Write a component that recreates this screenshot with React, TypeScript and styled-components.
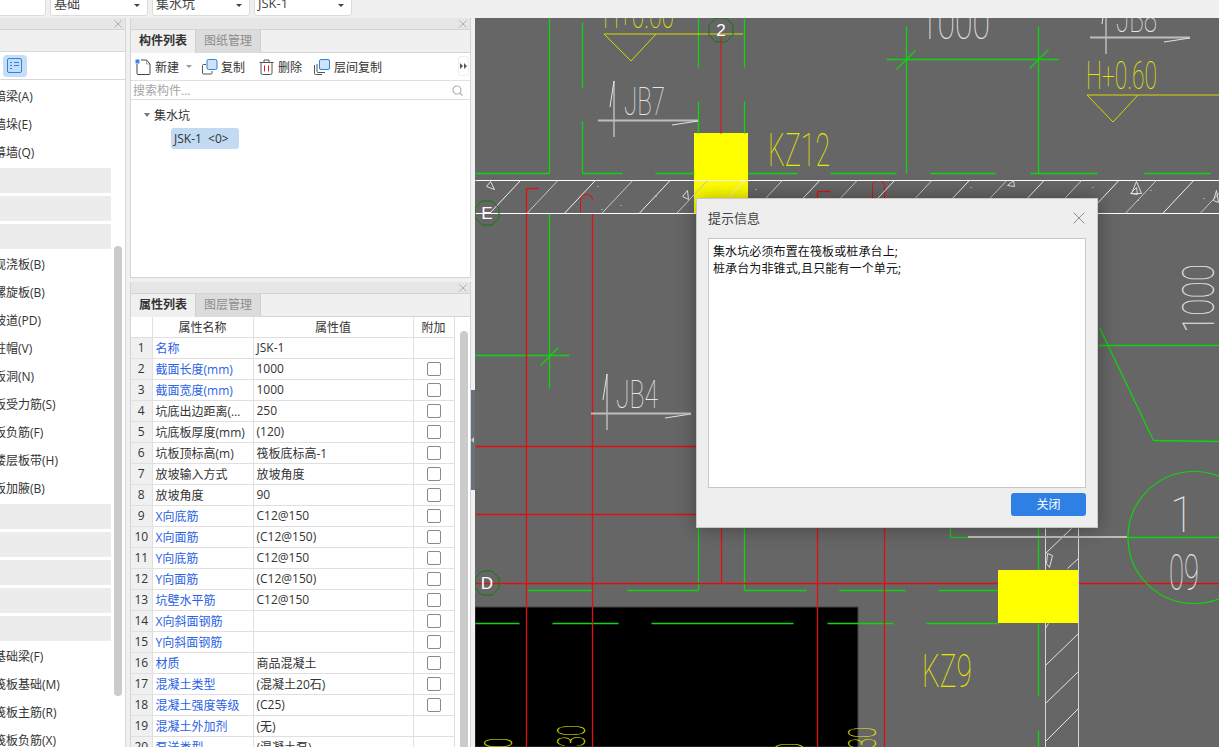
import React from 'react';
import styled, { createGlobalStyle } from 'styled-components';

const FONT = `"Open Sans", "Noto Sans CJK SC", sans-serif`;

const Global = createGlobalStyle`
  html, body { margin: 0; padding: 0; background: #f0f0f0; overflow: hidden; }
  * { box-sizing: border-box; }
  body { font-family: ${FONT}; font-size: 12px; color: #333; }
`;

const Page = styled.div`
  width: 1219px; height: 747px; display: flex; flex-direction: column; overflow: hidden; position: relative;
`;
const TopBar = styled.div`
  height: 18px; flex: none; background: #f0f0f0; display: flex; gap: 4px; align-items: flex-end; padding: 0 0 3px 0; margin-left: -52px; overflow: hidden;
`;
const Combo = styled.div`
  width: 98px; height: 22px; flex: none; background: #fff; border: 1px solid #dcdcdc; border-radius: 3px; padding: 0 3px; display: flex; align-items: center; justify-content: space-between; line-height: 14px; font-size: 13px; color: #444; margin-bottom: -1px;
  padding-bottom: 4px;
  &::after { content: ""; border-left: 3px solid transparent; border-right: 3px solid transparent; border-top: 3px solid #444; margin-right: 4px; margin-top: 5px; }
`;
const Main = styled.div`
  flex: 1; display: flex; min-height: 0;
`;
const Left = styled.aside`
  width: 126px; flex: none; background: #fff; border-right: 1px solid #d8d8d8; display: flex; flex-direction: column; overflow: hidden; position: relative;
`;
const TitleStrip = styled.div`
  height: 12px; flex: none; background: #e6e6e6; border-bottom: 1px solid #d4d4d4; display: flex; align-items: center; justify-content: flex-end; padding-right: 3px;
`;
const LeftStrip = styled.div`
  height: 22px; flex: none; background: #f0f0f0; border-bottom: 1px solid #d8d8d8;
`;
const LeftTools = styled.div`
  height: 28px; flex: none; border-bottom: 1px solid #d8d8d8; padding: 3px 0 3px 3px;
`;
const ListBtn = styled.div`
  width: 24px; height: 22px; background: #c4def5; border-radius: 4px; display: flex; align-items: center; justify-content: center;
`;
const LeftList = styled.div`
  flex: 1; display: flex; flex-direction: column; padding-top: 2.5px; width: 111px; overflow: hidden;
`;
const LeftItem = styled.div`
  height: 28px; flex: none; line-height: 28px; margin-left: -6px; white-space: nowrap; font-size: 12px; color: #333;
`;
const LeftBlank = styled.div`
  height: 25px; flex: none; margin: 1.5px 0; background: #ececec;
`;
const LeftThumb = styled.div`
  position: absolute; left: 114px; top: 228px; width: 8px; height: 450px; background: #cbcbcb; border-radius: 4px;
`;
const Gap = styled.div`
  width: 4px; flex: none; background: #f0f0f0;
`;
const Middle = styled.div`
  width: 341px; flex: none; display: flex; flex-direction: column; gap: 4px;
`;
const Panel = styled.section<{ $h?: number }>`
  ${p => (p.$h ? `height:${p.$h}px;flex:none;` : 'flex:1;min-height:0;')}
  background: #fff; border: 1px solid #d4d4d4; border-bottom-width: ${p => (p.$h ? 1 : 0)}px; border-top: 0; display: flex; flex-direction: column; overflow: hidden;
`;
const Tabs = styled.div`
  height: 23px; flex: none; background: #f0f0f0; border-bottom: 1px solid #d4d4d4; display: flex;
`;
const Tab = styled.div<{ $active?: boolean }>`
  width: 65px; height: 23px; line-height: 22px; text-align: center; font-size: 12px;
  font-weight: ${p => (p.$active ? 700 : 400)}; color: ${p => (p.$active ? '#333' : '#8c8c8c')};
  background: ${p => (p.$active ? '#f0f0f0' : '#dcdcdc')};
  border-right: 1px solid #d0d0d0;
`;
const Toolbar = styled.div`
  height: 28px; flex: none; display: flex; align-items: center; border-bottom: 1px solid #e0e0e0; padding-left: 4px; position: relative;
`;
const ToolBtn = styled.div<{ $w: number }>`
  width: ${p => p.$w}px; flex: none; display: flex; align-items: center; gap: 4px; font-size: 12px; color: #333; white-space: nowrap;
`;
const CopyLabel = styled.span`
  margin-left: -1px;
`;
const Caret = styled.span`
  border-left: 3px solid transparent; border-right: 3px solid transparent; border-top: 3px solid #999; margin-left: 3px;
`;
const MoreBtn = styled.div`
  position: absolute; right: 1px; top: 3px; width: 11px; height: 20px; border: 1px solid #eee; border-radius: 3px; display: flex; align-items: center; justify-content: center;
`;
const Search = styled.div`
  height: 19px; flex: none; border-bottom: 1px solid #e0e0e0; display: flex; align-items: center; justify-content: space-between; padding: 0 7px 0 2px; color: #a5a5a5; font-size: 12px;
`;
const Tree = styled.div`
  flex: 1; padding: 5px 0 0 13px;
`;
const TreeRoot = styled.div`
  height: 20px; display: flex; align-items: center; gap: 4px; color: #333;
  &::before { content: ""; border-left: 3.5px solid transparent; border-right: 3.5px solid transparent; border-top: 4px solid #777; }
`;
const TreeLeaf = styled.div`
  margin: 3px 0 0 27px; width: 68px; height: 21px; line-height: 21px; background: #c2daf2; border-radius: 3px; padding-left: 3px; white-space: pre; color: #333; font-size: 12px;
`;
const TableWrap = styled.div`
  flex: 1; min-height: 0; display: flex; overflow: hidden;
`;
const Table = styled.table`
  width: 323px; flex: none; border-collapse: collapse; table-layout: fixed; align-self: flex-start;
  td, th { border: 1px solid #e0e0e0; height: 21px; padding: 0; font-size: 12px; font-weight: 400; color: #333; overflow: hidden; white-space: nowrap; }
  th { height: 20px; }
  tr > *:first-child { border-left: 0; }
  tr:first-child > * { border-top: 0; }
`;
const NumCell = styled.td`
  background: #f0f0f0; text-align: center;
`;
const NameCell = styled.td<{ $blue?: boolean }>`
  && { color: ${p => (p.$blue ? '#2a62e6' : '#333')}; padding-left: 3px; }
`;
const ValueCell = styled.td`
  && { padding-left: 3px; }
`;
const CheckCell = styled.td`
  text-align: center; line-height: 0;
`;
const Check = styled.span`
  display: inline-block; width: 14px; height: 14px; border: 1px solid #8a8a8a; border-radius: 2px; background: #fff; vertical-align: middle;
`;
const Track = styled.div`
  flex: 1; position: relative; background: #fff;
`;
const TableThumb = styled.div`
  position: absolute; left: 5px; top: 14px; width: 8px; height: 430px; background: #cbcbcb; border-radius: 4px;
`;
const Splitter = styled.div`
  width: 4px; flex: none; background: #f0f0f0; position: relative;
`;
const SplitHandle = styled.div`
  position: absolute; left: 0; top: 372px; width: 4px; height: 100px; background: #68707a;
  &::after { content: ""; position: absolute; left: 0; top: 47px; border-top: 3px solid transparent; border-bottom: 3px solid transparent; border-right: 3px solid #c8c8c8; }
`;
const Canvas = styled.div`
  flex: 1; background: #666; position: relative; overflow: hidden;
`;
const Drawing = styled.svg`
  display: block; width: 744px; height: 729px;
`;
const CadText = styled.text`
  font-family: "Roboto", "Liberation Sans", sans-serif; font-weight: 100;
`;
const Dialog = styled.div`
  position: absolute; left: 221px; top: 180px; width: 402px; height: 330px; background: #eee; border: 1px solid #c8c8c8; box-shadow: 0 0 18px rgba(0,0,0,.35); padding: 0 11px 0 11px; display: flex; flex-direction: column;
`;
const DialogHead = styled.div`
  height: 39px; flex: none; display: flex; align-items: center; justify-content: space-between; font-size: 13px; color: #444; padding: 0 1px 2px 0;
`;
const MessageBox = styled.div`
  height: 250px; flex: none; background: #fff; border: 1px solid #c8c8c8; padding: 4px 4px; font-size: 12px; line-height: 17px; color: #111; letter-spacing: .12px;
`;
const DialogFoot = styled.div`
  flex: 1; display: flex; justify-content: flex-end; padding-top: 5px;
`;
const CloseBtn = styled.div`
  width: 75px; height: 23px; background: #2f80e4; border-radius: 3px; color: #fff; text-align: center; line-height: 24px; font-size: 12px;
`;

const X = ({ size = 8, color = '#a8a8a8' }: { size?: number; color?: string }) => (
  <svg width={size} height={size} viewBox="0 0 10 10"><path d="M.5.5l9 9M9.5.5l-9 9" stroke={color} strokeWidth={size > 10 ? 0.8 : 1.1} fill="none" /></svg>
);

const NewIcon = () => (
  <svg width="16" height="16" viewBox="0 0 16 16" fill="none">
    <path d="M2 5v9.5q0 1 1 1h11q1 0 1-1V5l-3.5-4H6" stroke="#444" />
    <path d="M11.5 1v4H15" stroke="#444" opacity=".4" />
    <rect x="0.5" y="0.5" width="4" height="4" fill="#3f86e0" />
  </svg>
);
const CopyIcon = () => (
  <svg width="16" height="16" viewBox="0 0 16 16" fill="none">
    <path d="M4 5.5H1.5q-1 0-1 1V14q0 1 1 1H9q1 0 1-1v-2" stroke="#555" />
    <rect x="5" y="0.5" width="10" height="10" rx="1.5" fill="#cfe2f8" stroke="#2f80e4" />
  </svg>
);
const TrashIcon = () => (
  <svg width="15" height="16" viewBox="0 0 15 16" fill="none">
    <path d="M.5 3.5h14M5 3.500V1h5v2.500M2 3.500V14q0 1.500 1.500 1.500h8q1.500 0 1.500-1.500V3.500" stroke="#555" />
    <path d="M5.500 6.500v6M9.500 6.500v6" stroke="#e02020" />
  </svg>
);
const LayerIcon = () => (
  <svg width="16" height="16" viewBox="0 0 16 16" fill="none">
    <path d="M.5 6v8.500q0 1 1 1H8" stroke="#555" />
    <path d="M3 5v7.500q0 1 1 1h7" stroke="#555" />
    <rect x="5.500" y="0.500" width="10" height="10" rx="1.500" fill="#cfe2f8" stroke="#2f80e4" />
  </svg>
);
const ListIcon = () => (
  <svg width="16" height="16" viewBox="0 0 16 16" fill="none" stroke="#2f80e4">
    <rect x=".5" y=".5" width="14" height="14" rx="1.500" />
    <path d="M3 4.500h2M7 4.500h5M3 7.500h2M7 7.500h5M3 10.500h2" />
  </svg>
);
const SearchIcon = () => (
  <svg width="11" height="11" viewBox="0 0 11 11" fill="none" stroke="#b0b0b0" strokeWidth="1.200">
    <circle cx="5" cy="5" r="4" /><path d="M8 8l2.500 2.500" />
  </svg>
);
const MoreIcon = () => (
  <svg width="7" height="6" viewBox="0 0 7 6"><path d="M0 0l3 3-3 3zM4 0l3 3-3 3z" fill="#555" /></svg>
);

const G = '#10d410';
const R = '#e01010';
const Y = '#e6e600';
const W = '#e4e4e4';

const gl: number[][] = [
  [549,18,549,173],[475,173,549,173],[582,22,582,88],[582,121,582,173],[582,173,622,173],[655,173,694,173],
  [698,18,698,67],[698,101,698,133],[744,18,744,67],[744,101,744,133],
  [748,173,797,173],[830,173,896,173],[930,173,995,173],[1030,173,1097,173],[1144,173,1210,173],
  [906,26,906,173],[1038,26,1038,173],[886,59,1058,59],[896,69,915,50],[1029,68,1048,49],
  [549,213,549,388],[475,355,569,355],[540,365,558,347],
  [698,528,698,590],[744,528,744,590],
  [527,590,593,590],[627,590,698,590],[744,590,806,590],[839,590,905,590],[938,590,998,590],
  [475,623,519,623],[552,623,618,623],[651,623,793,623],[827,623,893,623],[926,623,998,623],
  [1099,327,1153,440],[1153,440,1219,441],[1098,345,1219,345],
  [1038,528,1038,570],[1038,623,1038,696],[1038,730,1038,747],[950,528,950,537],[950,537,968,537],[1127,537,1219,537],
];
const rl: number[][] = [
  [526,188,526,747],[526,188,538,188],[592,213,592,747],[817,191,817,198],[817,191,830,191],
  [817,528,817,747],[884,528,884,747],[721,528,721,583],
  [475,446,696,446],[475,514,696,514],[475,583,1219,583],
];
const hatch = Array.from({ length: 20 }, (_, i) => 489 + i * 37.4);

const Cad = ({ x, y, w, size, color, children, rotate }: { x: number; y: number; w: number; size: number; color: string; children: string; rotate?: boolean }) => (
  <CadText x={rotate ? 0 : x} y={rotate ? 0 : y} fontSize={size} fill={color} textLength={w} lengthAdjust="spacingAndGlyphs" transform={rotate ? `translate(${x} ${y}) rotate(-90)` : undefined}>{children}</CadText>
);

const Bubble = ({ cx, cy, t }: { cx: number; cy: number; t: string }) => (
  <g>
    <polygon points={`${cx-5},${cy-12} ${cx+5},${cy-12} ${cx+12},${cy-5} ${cx+12},${cy+5} ${cx+5},${cy+12} ${cx-5},${cy+12} ${cx-12},${cy+5} ${cx-12},${cy-5}`} fill="none" stroke="#0a7a0a" />
    <text x={cx} y={cy + 6} textAnchor="middle" fontSize="17" fill="#fff" fontFamily='"Liberation Sans", sans-serif'>{t}</text>
  </g>
);

const Mark = ({ x, y }: { x: number; y: number }) => (
  <g fill="none">
    <path d={`M${x} ${y}V${y + 56}M${x - 4} ${y + 26}L${x} ${y}`} stroke={W} />
    <path d={`M${x - 16} ${y + 39.500}H${x + 84}`} stroke="#bdbdbd" strokeWidth="2" />
    <path d={`M${x + 58} ${y + 44}L${x + 84} ${y + 40}`} stroke={W} />
  </g>
);

const Plan = () => (
  <Drawing viewBox="475 18 744 729">
    <rect x="475" y="607" width="383" height="140" fill="#000" stroke="#444" />
    <rect x="694" y="133" width="54" height="80" fill="#ff0" />
    <g transform="translate(.5 .5)">
      {gl.map((l, i) => <line key={i} x1={l[0]} y1={l[1]} x2={l[2]} y2={l[3]} stroke={G} strokeWidth="1.300" />)}
      <line x1="720.500" y1="37" x2="720.500" y2="133" stroke="#b83030" strokeWidth="1.500" />
      {rl.map((l, i) => <line key={i} x1={l[0]} y1={l[1]} x2={l[2]} y2={l[3]} stroke={R} strokeWidth="1.300" />)}
      <path d="M580 213V200q0-6 6-6t6 6" fill="none" stroke={R} />
      <path d="M872 198V186q0-6 6-6t6 6V198" fill="none" stroke={R} />
      <path d="M475 180H1219M475 213H1219" stroke="#fff" strokeWidth="1" />
      {hatch.map((x, i) => <line key={i} x1={x} y1="213" x2={x + 31} y2="180" stroke={i % 2 ? '#c8c8c8' : '#f0f0f0'} />)}
      <path d="M490 181l4 8-8-3zM1013 180l1 6-7-1zM1136 187l1 7-7-1zM1141 193h-10l5-12zM682 196l5-6 1 9zM1213 200l3-10 2 12z" fill="none" stroke="#ddd" />
      <path d="M597 186h1M601 209h1M620 205h1M655 196h1M755 189h1M918 198h1M970 187h1M1092 187h1M1150 190h1M1203 198h1M1137 200h1" stroke="#ddd" />
      <path d="M1045 528V747M1078 528V747" stroke="#d8d8d8" strokeWidth="1" />
      <path d="M1045 553l26-25M1067 568l11-10M1045 665l33-32M1045 703l33-32M1045 741l33-33" stroke="#e4e4e4" />
      <path d="M1047 553l5 2-3 12-3-4zM1045 628l3-5" fill="none" stroke="#ddd" />
    </g>
    <rect x="998" y="570" width="80" height="53" fill="#ff0" />
    <path d="M968 537H1127" stroke="#bdbdbd" strokeWidth="2" />
    <circle cx="1194" cy="537.500" r="66" fill="none" stroke={G} strokeWidth="1.200" />
    <path d="M604 34H743M1087 95H1219" stroke="#d8d800" strokeWidth="1.200" />
    <path d="M604 34L631 61L656 34M1087 95L1113 122L1138 95" fill="none" stroke="#d8d800" />
    <Cad x={603} y={28} w={71} size={36} color={Y}>H+0.60</Cad>
    <Cad x={1086} y={89} w={71} size={38} color={Y}>H+0.60</Cad>
    <Cad x={768} y={166} w={62} size={46} color={Y}>KZ12</Cad>
    <Cad x={922} y={687} w={50} size={46} color={Y}>KZ9</Cad>
    <Mark x={614} y={81} />
    <Mark x={607} y={374} />
    <Mark x={1106} y={-2} />
    <Cad x={624} y={115} w={41} size={38} color={W}>JB7</Cad>
    <Cad x={616} y={408} w={42} size={38} color={W}>JB4</Cad>
    <Cad x={1116} y={32} w={41} size={38} color={W}>JB8</Cad>
    <Cad x={920} y={39} w={70} size={45} color={W}>1000</Cad>
    <Cad x={1214} y={333} w={69} size={45} color={W} rotate>1000</Cad>
    <Cad x={1170} y={532} w={24} size={50} color={W}>1</Cad>
    <Cad x={1169} y={590} w={30} size={50} color={W}>09</Cad>
    <Cad x={585} y={747} w={22} size={38} color={Y} rotate>30</Cad>
    <Cad x={876} y={749} w={22} size={38} color={Y} rotate>30</Cad>
    <Cad x={512} y={748} w={10} size={38} color={Y} rotate>0</Cad>
    <Cad x={803} y={753} w={10} size={38} color={Y} rotate>0</Cad>
    <Bubble cx={721} cy={30} t="2" />
    <Bubble cx={487} cy={213} t="E" />
    <Bubble cx={487} cy={583} t="D" />
  </Drawing>
);

const leftItems: (string | null)[] = [
  '暗梁(A)', '墙垛(E)', '幕墙(Q)', null, null, null,
  '现浇板(B)', '螺旋板(B)', '坡道(PD)', '柱帽(V)', '板洞(N)', '板受力筋(S)', '板负筋(F)', '楼层板带(H)', '板加腋(B)',
  null, null, null, null, null,
  '基础梁(F)', '筏板基础(M)', '筏板主筋(R)', '筏板负筋(X)',
];

type Row = [string, boolean, string, boolean];
const rows: Row[] = [
  ['名称', true, 'JSK-1', false],
  ['截面长度(mm)', true, '1000', true],
  ['截面宽度(mm)', true, '1000', true],
  ['坑底出边距离(…', false, '250', true],
  ['坑底板厚度(mm)', false, '(120)', true],
  ['坑板顶标高(m)', false, '筏板底标高-1', true],
  ['放坡输入方式', false, '放坡角度', true],
  ['放坡角度', false, '90', true],
  ['X向底筋', true, 'C12@150', true],
  ['X向面筋', true, '(C12@150)', true],
  ['Y向底筋', true, 'C12@150', true],
  ['Y向面筋', true, '(C12@150)', true],
  ['坑壁水平筋', true, 'C12@150', true],
  ['X向斜面钢筋', true, '', true],
  ['Y向斜面钢筋', true, '', true],
  ['材质', true, '商品混凝土', true],
  ['混凝土类型', true, '(混凝土20石)', true],
  ['混凝土强度等级', true, '(C25)', true],
  ['混凝土外加剂', true, '(无)', false],
  ['泵送类型', true, '(混凝土泵)', false],
];

export default function App() {
  return (
    <Page>
      <Global />
      <TopBar>
        <Combo />
        <Combo>基础</Combo>
        <Combo>集水坑</Combo>
        <Combo>JSK-1</Combo>
      </TopBar>
      <Main>
        <Left>
          <TitleStrip><X /></TitleStrip>
          <LeftStrip />
          <LeftTools><ListBtn><ListIcon /></ListBtn></LeftTools>
          <LeftList>
            {leftItems.map((t, i) => (t ? <LeftItem key={i}>{t}</LeftItem> : <LeftBlank key={i} />))}
          </LeftList>
          <LeftThumb />
        </Left>
        <Gap />
        <Middle>
          <Panel $h={260}>
            <TitleStrip><X /></TitleStrip>
            <Tabs><Tab $active>构件列表</Tab><Tab>图纸管理</Tab></Tabs>
            <Toolbar>
              <ToolBtn $w={67}><NewIcon />新建<Caret /></ToolBtn>
              <ToolBtn $w={57}><CopyIcon /><CopyLabel>复制</CopyLabel></ToolBtn>
              <ToolBtn $w={55}><TrashIcon />删除</ToolBtn>
              <ToolBtn $w={90}><LayerIcon />层间复制</ToolBtn>
              <MoreBtn><MoreIcon /></MoreBtn>
            </Toolbar>
            <Search>搜索构件...<SearchIcon /></Search>
            <Tree>
              <TreeRoot>集水坑</TreeRoot>
              <TreeLeaf>{'JSK-1  <0>'}</TreeLeaf>
            </Tree>
          </Panel>
          <Panel>
            <TitleStrip><X /></TitleStrip>
            <Tabs><Tab $active>属性列表</Tab><Tab>图层管理</Tab></Tabs>
            <TableWrap>
              <Table>
                <colgroup>
                  <col style={{ width: 21 }} /><col style={{ width: 101 }} /><col style={{ width: 160 }} /><col style={{ width: 41 }} />
                </colgroup>
                <thead>
                  <tr><th /><th>属性名称</th><th>属性值</th><th>附加</th></tr>
                </thead>
                <tbody>
                  {rows.map((r, i) => (
                    <tr key={i}>
                      <NumCell>{i + 1}</NumCell>
                      <NameCell $blue={r[1]}>{r[0]}</NameCell>
                      <ValueCell>{r[2]}</ValueCell>
                      <CheckCell>{r[3] && <Check />}</CheckCell>
                    </tr>
                  ))}
                </tbody>
              </Table>
              <Track><TableThumb /></Track>
            </TableWrap>
          </Panel>
        </Middle>
        <Splitter><SplitHandle /></Splitter>
        <Canvas>
          <Plan />
          <Dialog>
            <DialogHead>提示信息<X size={12} color="#888" /></DialogHead>
            <MessageBox>集水坑必须布置在筏板或桩承台上;<br />桩承台为非锥式,且只能有一个单元;</MessageBox>
            <DialogFoot><CloseBtn>关闭</CloseBtn></DialogFoot>
          </Dialog>
        </Canvas>
      </Main>
    </Page>
  );
}
